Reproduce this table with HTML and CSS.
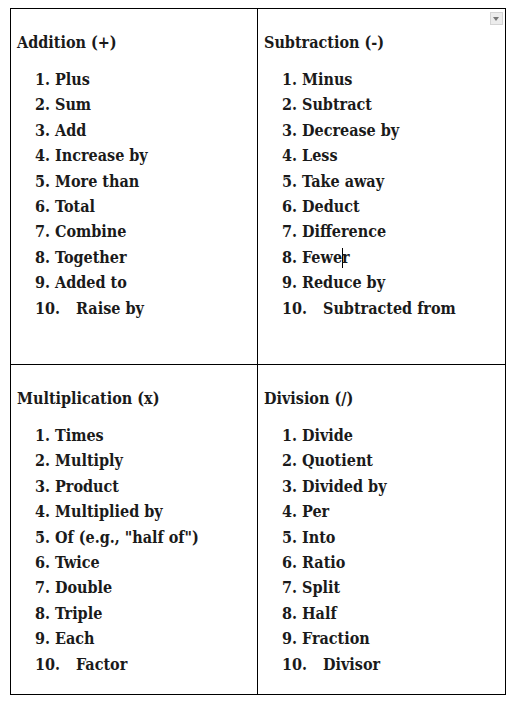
FILE: index.html
```html
<!DOCTYPE html>
<html>
<head>
<meta charset="utf-8">
<link rel="stylesheet" href="styles.css">
</head>
<body>
<div class="table">
  <div class="cell">
    <div class="heading">Addition (+)</div>
    <ol class="list">
      <li><span class="num">1.</span>Plus</li>
      <li><span class="num">2.</span>Sum</li>
      <li><span class="num">3.</span>Add</li>
      <li><span class="num">4.</span>Increase by</li>
      <li><span class="num">5.</span>More than</li>
      <li><span class="num">6.</span>Total</li>
      <li><span class="num">7.</span>Combine</li>
      <li><span class="num">8.</span>Together</li>
      <li><span class="num">9.</span>Added to</li>
      <li><span class="num wide">10.</span>Raise by</li>
    </ol>
  </div>
  <div class="cell">
    <span class="dropdown"></span>
    <div class="heading">Subtraction (-)</div>
    <ol class="list">
      <li><span class="num">1.</span>Minus</li>
      <li><span class="num">2.</span>Subtract</li>
      <li><span class="num">3.</span>Decrease by</li>
      <li><span class="num">4.</span>Less</li>
      <li><span class="num">5.</span>Take away</li>
      <li><span class="num">6.</span>Deduct</li>
      <li><span class="num">7.</span>Difference</li>
      <li><span class="num">8.</span>Fewe<span class="caret"></span>r</li>
      <li><span class="num">9.</span>Reduce by</li>
      <li><span class="num wide">10.</span>Subtracted from</li>
    </ol>
  </div>
  <div class="cell">
    <div class="heading">Multiplication (x)</div>
    <ol class="list">
      <li><span class="num">1.</span>Times</li>
      <li><span class="num">2.</span>Multiply</li>
      <li><span class="num">3.</span>Product</li>
      <li><span class="num">4.</span>Multiplied by</li>
      <li><span class="num">5.</span>Of (e.g., "half of")</li>
      <li><span class="num">6.</span>Twice</li>
      <li><span class="num">7.</span>Double</li>
      <li><span class="num">8.</span>Triple</li>
      <li><span class="num">9.</span>Each</li>
      <li><span class="num wide">10.</span>Factor</li>
    </ol>
  </div>
  <div class="cell">
    <div class="heading">Division (/)</div>
    <ol class="list">
      <li><span class="num">1.</span>Divide</li>
      <li><span class="num">2.</span>Quotient</li>
      <li><span class="num">3.</span>Divided by</li>
      <li><span class="num">4.</span>Per</li>
      <li><span class="num">5.</span>Into</li>
      <li><span class="num">6.</span>Ratio</li>
      <li><span class="num">7.</span>Split</li>
      <li><span class="num">8.</span>Half</li>
      <li><span class="num">9.</span>Fraction</li>
      <li><span class="num wide">10.</span>Divisor</li>
    </ol>
  </div>
</div>
</body>
</html>
```

FILE: styles.css
```css
html, body {
  margin: 0;
  padding: 0;
  background: #fff;
}
body {
  padding: 8px 0 0 10px;
  font-family: "DejaVu Serif Condensed", "DejaVu Serif", serif;
  font-weight: 700;
  font-size: 16px;
  color: #1a1a1a;
}
.table {
  display: grid;
  grid-template-columns: 247px 248px;
  grid-template-rows: 356px 330px;
  width: 496px;
  box-sizing: border-box;
  border-right: 1px solid #000;
  border-bottom: 1px solid #000;
}
.cell {
  position: relative;
  border-left: 1px solid #000;
  border-top: 1px solid #000;
  padding: 21px 0 0 6px;
}
.heading {
  line-height: 25px;
  height: 25px;
}
.list {
  list-style: none;
  margin: 12px 0 0 0;
  padding: 0 0 0 18px;
}
.list li {
  line-height: 25.4px;
  height: 25.4px;
  white-space: nowrap;
}
.num {
  display: inline-block;
  width: 20px;
}
.num.wide {
  width: 41px;
}
.caret {
  display: inline-block;
  width: 1px;
  height: 20px;
  background: #000;
  vertical-align: -5px;
  margin-right: -1px;
}
.dropdown {
  position: absolute;
  top: 3px;
  right: 2px;
  width: 13px;
  height: 13px;
  box-sizing: border-box;
  background: #ececec;
  border: 1px solid #d4d4d4;
}
.dropdown::after {
  content: "";
  position: absolute;
  left: 2px;
  top: 4px;
  border-left: 3.5px solid transparent;
  border-right: 3.5px solid transparent;
  border-top: 4px solid #777;
}
```
